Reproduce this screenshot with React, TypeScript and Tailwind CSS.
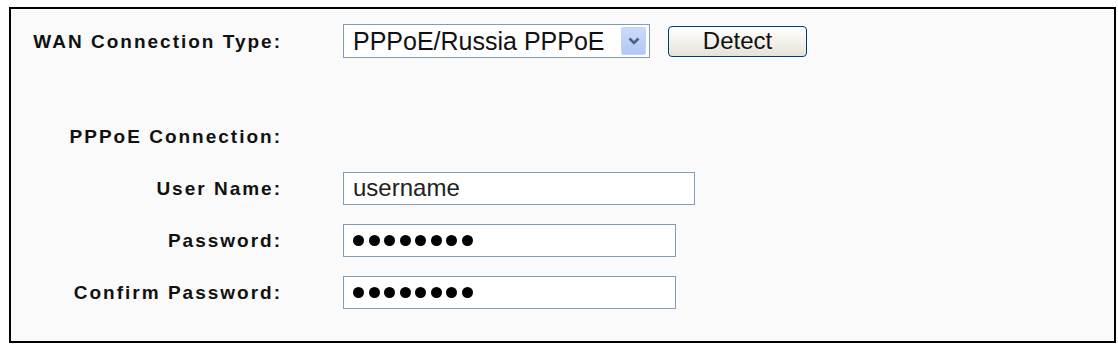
import React from "react";

const labelCls =
  "text-right text-[19px] font-bold tracking-[2px] text-[#111] leading-none";

function Dots({ n }: { n: number }) {
  return (
    <div className="flex items-center gap-[4.5px] pl-[9px]">
      {Array.from({ length: n }).map((_, i) => (
        <span key={i} className="block w-[11px] h-[11px] rounded-full bg-black" />
      ))}
    </div>
  );
}

function Row({
  label,
  children,
  className = "",
}: {
  label: string;
  children?: React.ReactNode;
  className?: string;
}) {
  return (
    <div className={"flex items-center h-[34px] " + className}>
      <div className="w-[269px] flex justify-end">
        <span className={labelCls} style={{ marginRight: "-2px" }}>
          {label}
        </span>
      </div>
      <div className="ml-[63px] flex items-center">{children}</div>
    </div>
  );
}

export default function App() {
  return (
    <div
      className="w-[1118px] h-[351px] bg-white pt-[7px] pl-[9px]"
      style={{ fontFamily: '"Liberation Sans", Arial, sans-serif' }}
    >
      <div className="w-[1107px] h-[336px] border-2 border-black bg-[#fafafa] flex flex-col pt-[15px]">
        <Row label="WAN Connection Type:">
          <div className="relative w-[307px] h-[34px] border border-[#7f9db9] bg-white flex items-center">
            <span className="pl-[9px] text-[25px] leading-none text-[#111]">
              PPPoE/Russia PPPoE
            </span>
            <div className="absolute right-[3px] top-[2px] bottom-[2px] w-[25px] rounded-[2px] bg-gradient-to-b from-[#cbdafa] to-[#b2c7f2] border border-[#c3d3fd] flex items-center justify-center">
              <svg width="14" height="10" viewBox="0 0 14 10">
                <path d="M2.5 2.5 L7 7 L11.5 2.5" fill="none" stroke="#4d6185" strokeWidth="2.6" />
              </svg>
            </div>
          </div>
          <button className="ml-[18px] w-[139px] h-[31px] rounded-[4px] border border-[#003c74] bg-gradient-to-b from-white to-[#e6e3d6] text-[24px] leading-none text-[#111] flex items-center justify-center">
            Detect
          </button>
        </Row>
        <Row label="PPPoE Connection:" className="mt-[61px]" />
        <Row label="User Name:" className="mt-[18px]">
          <div className="w-[352px] h-[33px] border border-[#7f9db9] bg-white flex items-center">
            <span className="pl-[9px] text-[24px] leading-none text-[#222]">username</span>
          </div>
        </Row>
        <Row label="Password:" className="mt-[18px]">
          <div className="w-[333px] h-[33px] border border-[#7f9db9] bg-white flex items-center">
            <Dots n={8} />
          </div>
        </Row>
        <Row label="Confirm Password:" className="mt-[18px]">
          <div className="w-[333px] h-[33px] border border-[#7f9db9] bg-white flex items-center">
            <Dots n={8} />
          </div>
        </Row>
      </div>
    </div>
  );
}
